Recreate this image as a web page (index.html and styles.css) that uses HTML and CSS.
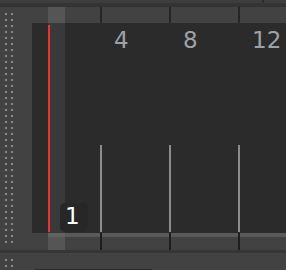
FILE: index.html
```html
<!DOCTYPE html>
<html lang="en">
<head>
    <meta charset="UTF-8">
    <title>Timeline</title>
    <link rel="stylesheet" href="styles.css">
</head>
<body>
    <div class="editor">
        <!-- top strip -->
        <div class="titlebar"><div class="titlebar-notch"></div></div>

        <div class="main">
            <div class="grip"><div class="dots"></div></div>

            <div class="track">
                <!-- bar ruler -->
                <div class="row ruler">
                    <div class="lead"></div>
                    <div class="bar"></div>
                    <div class="bar"></div>
                    <div class="bar"></div>
                </div>

                <!-- lanes -->
                <div class="row lanes">
                    <div class="lead">
                        <span class="playhead"></span>
                        <span class="marker">1</span>
                    </div>
                    <div class="bar"><span class="bar-num">4</span><span class="bar-line"></span></div>
                    <div class="bar"><span class="bar-num">8</span><span class="bar-line"></span></div>
                    <div class="bar"><span class="bar-num">12</span><span class="bar-line"></span></div>
                </div>

                <!-- bottom ruler -->
                <div class="row foot">
                    <div class="lead"></div>
                    <div class="bar"></div>
                    <div class="bar"></div>
                    <div class="bar"></div>
                </div>
            </div>
        </div>

        <div class="divider"></div>

        <div class="bottom">
            <div class="grip"><div class="dots dots-short"></div></div>
            <div class="scroll"><div class="scroll-thumb"></div></div>
        </div>
    </div>
</body>
</html>
```

FILE: styles.css
```css
* {
    margin: 0;
    padding: 0;
    box-sizing: border-box;
}

body {
    font-family: 'DejaVu Sans', 'Open Sans', sans-serif;
    background: #424242;
    width: 286px;
    height: 270px;
    overflow: hidden;
}

.editor {
    display: flex;
    flex-direction: column;
    height: 270px;
    overflow: hidden;
}

.titlebar {
    height: 7px;
    flex-shrink: 0;
    background: linear-gradient(#3e3e3e 3px, #343434 3px);
}

.titlebar-notch {
    width: 2px;
    height: 3px;
    margin-left: 262px;
    background: #2c2c2c;
}

.main {
    display: flex;
    height: 243px;
    flex-shrink: 0;
}

.grip {
    width: 32px;
    flex-shrink: 0;
    background: #424242;
}

.dots {
    margin: 6px 0 0 5px;
    width: 8px;
    height: 230px;
    background: conic-gradient(from 270deg at 2px 2px, #8a8a8a 25%, transparent 0) 0 0 / 6px 6px;
}

.dots-short {
    height: 11px;
}

.track {
    flex: 1;
    display: flex;
    flex-direction: column;
    overflow: hidden;
}

.row {
    display: flex;
}

.lead {
    width: 68px;
    flex-shrink: 0;
}

.bar {
    width: 69px;
    flex-shrink: 0;
}

/* ruler */
.ruler {
    height: 16px;
    background: #424242;
}

.ruler .lead {
    background: linear-gradient(90deg, transparent 16px, #555 16px 33px, transparent 33px);
}

.ruler .bar {
    border-left: 2px solid #262626;
}

/* lanes */
.lanes {
    height: 210px;
    background: #2b2b2b;
}

.lanes .lead {
    position: relative;
    padding: 2px 0 1px 16px;
    background: linear-gradient(90deg, transparent 16px, #393939 16px 33px, transparent 33px);
}

.playhead {
    display: block;
    width: 2px;
    height: 100%;
    background: #e8342f;
}

.marker {
    position: absolute;
    left: 28px;
    top: 180px;
    width: 28px;
    height: 29px;
    padding: 2px 0 0 5px;
    border-radius: 5px;
    background: #272727;
    color: #fff;
    font-size: 23px;
    line-height: 23px;
}

.lanes .bar {
    display: flex;
    flex-direction: column;
    justify-content: space-between;
}

.bar-num {
    padding: 6px 0 0 14px;
    color: #9da2a8;
    font-size: 23px;
    line-height: 23px;
}

.bar-line {
    width: 2px;
    height: 87px;
    margin-bottom: 1px;
    background: #8c8c8c;
}

/* bottom ruler */
.foot {
    height: 17px;
}

.foot .lead {
    background:
        linear-gradient(90deg, #424242 16px, transparent 16px),
        linear-gradient(#626262 4px, #555 4px) 16px 0 / 17px 100% no-repeat,
        linear-gradient(#5a5a5a 4px, #424242 4px);
}

.foot .bar {
    border-left: 2px solid #1e1e1e;
    background: linear-gradient(#5a5a5a 4px, #424242 4px);
}

.divider {
    height: 3px;
    flex-shrink: 0;
    background: #363636;
}

.bottom {
    display: flex;
    height: 17px;
    flex-shrink: 0;
}

.scroll {
    flex: 1;
    padding: 16px 0 0 2px;
}

.scroll-thumb {
    width: 118px;
    height: 1px;
    background: #2a2a2a;
}
```
